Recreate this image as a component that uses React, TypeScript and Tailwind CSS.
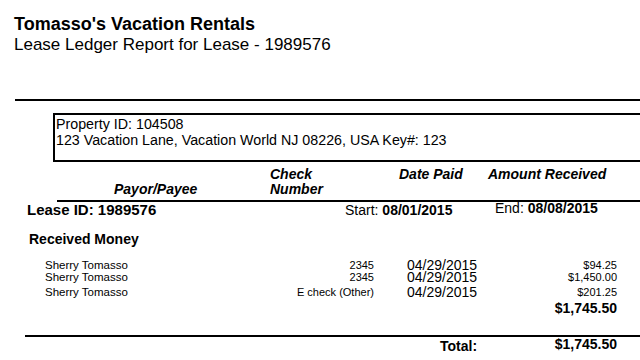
export default function App() {
  const rows = [
    { name: "Sherry Tomasso", check: "2345", date: "04/29/2015", amt: "$94.25", h: "h-[12px]" },
    { name: "Sherry Tomasso", check: "2345", date: "04/29/2015", amt: "$1,450.00", h: "h-[12px]" },
    { name: "Sherry Tomasso", check: "E check (Other)", date: "04/29/2015", amt: "$201.25", h: "h-[18px]" },
  ];
  return (
    <div className="w-[640px] h-[360px] overflow-hidden bg-white text-black font-['Liberation_Sans',Arial,sans-serif] flex flex-col">
      <div className="pl-[14px] pt-[15px] text-[18px] leading-[18px] font-bold">Tomasso's Vacation Rentals</div>
      <div className="pl-[14px] mt-[3px] text-[17px] leading-[17px]">Lease Ledger Report for Lease - 1989576</div>

      <div className="ml-[15px] mt-[46px] h-[2px] bg-black" />

      <div className="ml-[53px] mr-[-6px] mt-[12px] h-[49px] border-2 border-black pl-[1px] pt-[1px] text-[14.25px] leading-[16px]">
        <div>Property ID: 104508</div>
        <div>123 Vacation Lane, Vacation World NJ 08226, USA Key#: 123</div>
      </div>

      <div className="flex mt-[5px] text-[14px] leading-[15px] font-bold italic">
        <div className="w-[270px] pl-[114px] self-end">Payor/Payee</div>
        <div className="w-[129px]">
          <div>Check</div>
          <div>Number</div>
        </div>
        <div className="w-[89px]">Date Paid</div>
        <div>Amount Received</div>
      </div>

      <div className="ml-[57px] mt-[3px] h-[2px] bg-black" />

      <div className="flex h-[16px] items-center text-[14px] leading-[16px]">
        <div className="w-[345px] pl-[27px] font-bold text-[15px]">Lease ID: 1989576</div>
        <div className="w-[150px]">
          Start: <span className="font-bold">08/01/2015</span>
        </div>
        <div className="mb-[4px]">
          End: <span className="font-bold">08/08/2015</span>
        </div>
      </div>

      <div className="pl-[29px] mt-[13px] h-[16px] flex items-center text-[14px] leading-[16px] font-bold">Received Money</div>

      <div className="mt-[12px] flex flex-col">
        {rows.map((r, i) => (
          <div key={i} className={`flex items-center ${r.h}`}>
            <div className="w-[245px] pl-[45px] text-[11.5px] leading-[12px]">{r.name}</div>
            <div className="w-[129px] text-right text-[11px] leading-[12px]">{r.check}</div>
            <div className="w-[100px] ml-[33px] text-[14px] leading-[12px]">{r.date}</div>
            <div className="w-[110px] text-right text-[11px] leading-[12px]">{r.amt}</div>
          </div>
        ))}
        <div className="flex h-[14px] items-center">
          <div className="w-[617px] text-right text-[14px] leading-[14px] font-bold">$1,745.50</div>
        </div>
      </div>

      <div className="ml-[25px] mt-[20px] h-[2px] bg-black" />

      <div className="flex h-[14px] items-center text-[14px] leading-[14px] font-bold">
        <div className="w-[440px]" />
        <div className="w-[60px] mt-[3px]">Total:</div>
        <div className="w-[117px] text-right">$1,745.50</div>
      </div>
    </div>
  );
}
